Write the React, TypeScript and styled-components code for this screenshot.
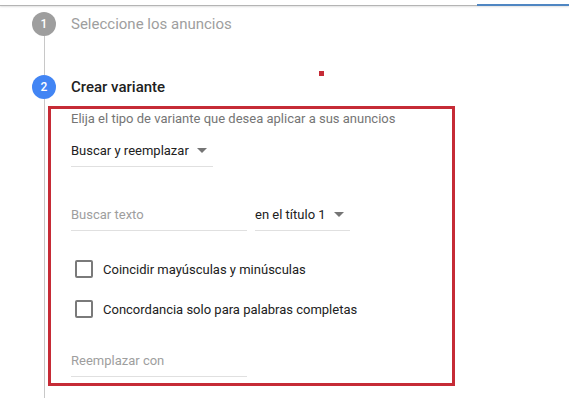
import React from "react"
import styled, { createGlobalStyle } from "styled-components"

const GlobalStyle = createGlobalStyle`
    body {
        margin: 0;
        background: #ffffff;
        font-family: Roboto, "Liberation Sans", Arial, sans-serif;
        overflow: hidden;
    }
`

const Page = styled.div`
    position: relative;
    width: 569px;
    height: 398px;
    overflow: hidden;
`

const TopBar = styled.div`
    display: flex;
    align-items: flex-end;
    height: 5px;
    border-bottom: 1px solid #b4b4b4;
    box-shadow: 0 1px 2px rgba(0, 0, 0, 0.12);
`

const TopBarSpacer = styled.div`
    flex: 1;
`

const TopBarAccent = styled.div`
    width: 92px;
    height: 2px;
    margin-bottom: -1px;
    background: #4f86c2;
`

const Stepper = styled.div`
    display: flex;
    flex-direction: column;
    padding: 6px 0 0 32px;
`

const StepHeader = styled.div`
    display: flex;
    align-items: center;
    gap: 15px;
    height: 24px;
`

const StepCircle = styled.div<{ active?: boolean }>`
    display: flex;
    align-items: center;
    justify-content: center;
    width: 24px;
    height: 24px;
    border-radius: 50%;
    background: ${({ active }) => (active ? "#4285f4" : "#9e9e9e")};
    color: #ffffff;
    font-size: 12px;
    font-weight: 500;
`

const StepTitle = styled.div<{ active?: boolean }>`
    font-size: 15px;
    font-weight: ${({ active }) => (active ? 500 : 400)};
    color: ${({ active }) => (active ? "#212121" : "#9e9e9e")};
`

const StepBody = styled.div<{ height?: number }>`
    margin-left: 12px;
    border-left: 1px solid #c8c8c8;
    height: ${({ height }) => (height ? `${height}px` : "auto")};
    padding: 7px 0 0 3px;
`

const AnnotationBox = styled.div`
    box-sizing: border-box;
    width: 407px;
    border: 3px solid #c62b36;
    padding: 2px 0 6px 20px;
`

const Hint = styled.div`
    font-size: 13px;
    line-height: 16px;
    color: #757575;
`

const Field = styled.div<{ width: number; top?: number }>`
    display: flex;
    align-items: center;
    width: ${({ width }) => width}px;
    margin-top: ${({ top }) => top || 0}px;
    height: 24px;
    padding-bottom: 4px;
    border-bottom: 1px solid #e0e0e0;
    font-size: 13px;
`

const FieldText = styled.span<{ placeholder?: boolean }>`
    color: ${({ placeholder }) => (placeholder ? "#9e9e9e" : "#212121")};
`

const Arrow = styled.span`
    width: 0;
    height: 0;
    margin: 1px 0 0 8px;
    border-left: 5px solid transparent;
    border-right: 5px solid transparent;
    border-top: 5px solid #757575;
`

const FieldRow = styled.div`
    display: flex;
    gap: 8px;
    margin-top: 35px;
`

const CheckList = styled.div`
    display: flex;
    flex-direction: column;
    margin-top: 18px;
`

const CheckRow = styled.label`
    display: flex;
    align-items: center;
    gap: 10px;
    height: 40px;
    padding-left: 4px;
    font-size: 13px;
    color: #212121;
`

const CheckBox = styled.span`
    box-sizing: border-box;
    width: 18px;
    height: 18px;
    border: 2px solid #7a7a7a;
    border-radius: 2px;
`

const RedDot = styled.div`
    position: absolute;
    left: 319px;
    top: 71px;
    width: 5px;
    height: 5px;
    background: #c62b36;
`

export default function App() {
    const options = [
        "Coincidir mayúsculas y minúsculas",
        "Concordancia solo para palabras completas",
    ]

    return (
        <Page>
            <GlobalStyle />
            <TopBar>
                <TopBarSpacer />
                <TopBarAccent />
            </TopBar>
            <Stepper>
                <StepHeader>
                    <StepCircle>1</StepCircle>
                    <StepTitle>Seleccione los anuncios</StepTitle>
                </StepHeader>
                <StepBody height={32} />
                <StepHeader>
                    <StepCircle active>2</StepCircle>
                    <StepTitle active>Crear variante</StepTitle>
                </StepHeader>
                <StepBody height={300}>
                    <AnnotationBox>
                        <Hint>Elija el tipo de variante que desea aplicar a sus anuncios</Hint>
                        <Field width={142} top={11}>
                            <FieldText>Buscar y reemplazar</FieldText>
                            <Arrow />
                        </Field>
                        <FieldRow>
                            <Field width={176}>
                                <FieldText placeholder>Buscar texto</FieldText>
                            </Field>
                            <Field width={95}>
                                <FieldText>en el título 1</FieldText>
                                <Arrow />
                            </Field>
                        </FieldRow>
                        <CheckList>
                            {options.map((label) => (
                                <CheckRow key={label}>
                                    <CheckBox />
                                    {label}
                                </CheckRow>
                            ))}
                        </CheckList>
                        <Field width={176} top={19}>
                            <FieldText placeholder>Reemplazar con</FieldText>
                        </Field>
                    </AnnotationBox>
                </StepBody>
            </Stepper>
            <RedDot />
        </Page>
    )
}
